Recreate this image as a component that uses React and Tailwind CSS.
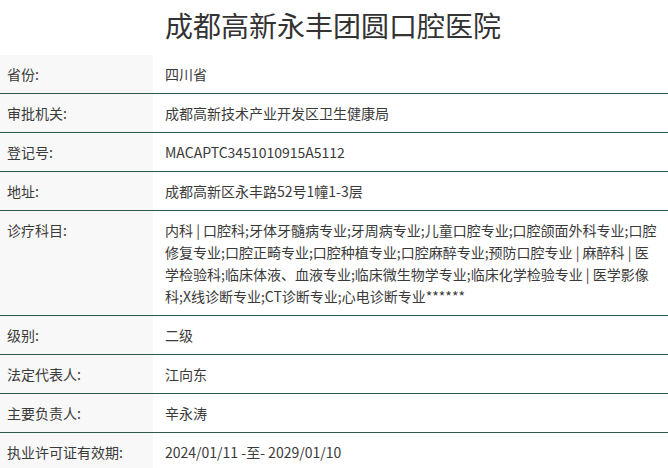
export default function App() {
  const rows = [
    ["省份:", "四川省"],
    ["审批机关:", "成都高新技术产业开发区卫生健康局"],
    ["登记号:", "MACAPTC3451010915A5112"],
    ["地址:", "成都高新区永丰路52号1幢1-3层"],
    [
      "诊疗科目:",
      "内科 | 口腔科;牙体牙髓病专业;牙周病专业;儿童口腔专业;口腔颌面外科专业;口腔修复专业;口腔正畸专业;口腔种植专业;口腔麻醉专业;预防口腔专业 | 麻醉科 | 医学检验科;临床体液、血液专业;临床微生物学专业;临床化学检验专业 | 医学影像科;X线诊断专业;CT诊断专业;心电诊断专业******",
    ],
    ["级别:", "二级"],
    ["法定代表人:", "江向东"],
    ["主要负责人:", "辛永涛"],
    ["执业许可证有效期:", "2024/01/11 -至- 2029/01/10"],
  ];
  return (
    <div
      className="w-[668px] h-[468px] overflow-hidden bg-white text-[#3a3a3a]"
      style={{ fontFamily: '"Noto Sans CJK SC", "Noto Sans", sans-serif' }}
    >
      <h1 className="h-[55px] flex items-center justify-center text-[28px] font-normal text-[#333] pb-[6px] pr-[2px]">
        成都高新永丰团圆口腔医院
      </h1>
      <div className="flex flex-col">
        {rows.map(([k, v], i) => (
          <div
            key={i}
            className={`flex text-[14px] leading-[22px] ${i < rows.length - 1 ? "border-b border-[#2d5a4b]" : ""}`}
          >
            <div className="w-[153px] shrink-0 bg-[#f8f8f8] pl-[7px] py-[8px]">{k}</div>
            <div className="flex-1 pl-[12px] pr-[8px] py-[8px]">{v}</div>
          </div>
        ))}
      </div>
    </div>
  );
}
